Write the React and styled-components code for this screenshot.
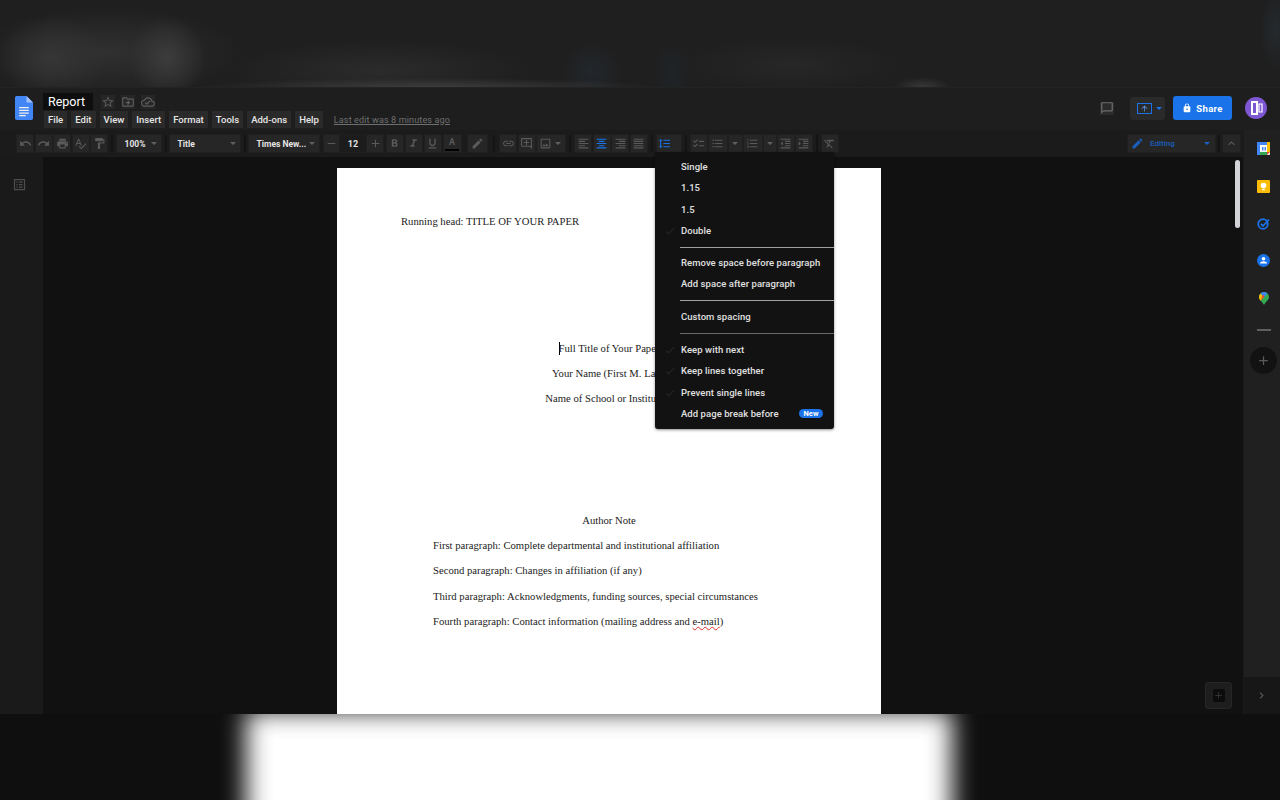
import React from 'react';
import styled, { createGlobalStyle } from 'styled-components';
import {
  MdUndo, MdRedo, MdPrint, MdSpellcheck, MdFormatPaint, MdFormatBold, MdFormatItalic, MdFormatUnderlined,
  MdEdit, MdLink, MdOutlineAddComment, MdOutlineImage, MdFormatAlignLeft, MdFormatAlignCenter, MdFormatAlignRight,
  MdFormatAlignJustify, MdFormatLineSpacing, MdChecklist, MdFormatListBulleted, MdFormatListNumbered,
  MdFormatIndentDecrease, MdFormatIndentIncrease, MdFormatClear, MdExpandLess, MdStarBorder, MdOutlineDriveFileMove,
  MdOutlineCloudDone, MdLock, MdCheck, MdAdd, MdRemove, MdChevronRight, MdOutlineChatBubbleOutline,
  MdOutlineListAlt, MdArrowUpward,
} from 'react-icons/md';

const Global = createGlobalStyle`
  html, body { margin: 0; padding: 0; background: #101010; overflow: hidden; }
  * { box-sizing: border-box; }
`;

const Screen = styled.div`
  width: 1280px; height: 800px; display: flex; flex-direction: column; overflow: hidden;
  font-family: Roboto, "Liberation Sans", sans-serif; background: #101010;
`;
const TopBackdrop = styled.div`
  height: 87px; flex: none;
  background:
    radial-gradient(ellipse 38px 42px at 167px 58px, #3c3c3c, transparent),
    radial-gradient(ellipse 55px 42px at 52px 58px, #363636, transparent),
    radial-gradient(ellipse 130px 45px at 110px 52px, #303030, transparent),
    radial-gradient(ellipse 230px 9px at 430px 87px, #3c3c3c, transparent),
    radial-gradient(ellipse 30px 30px at 592px 72px, #22272c, transparent),
    radial-gradient(ellipse 20px 28px at 672px 72px, #1f2428, transparent),
    radial-gradient(ellipse 28px 10px at 922px 87px, #383838, transparent),
    radial-gradient(ellipse 110px 28px at 790px 65px, #272727, transparent),
    radial-gradient(ellipse 150px 30px at 380px 70px, #2b2b2b, transparent),
    radial-gradient(ellipse 16px 40px at 1276px 30px, #252a2e, transparent),
    linear-gradient(#1f1f1f, #1f1f1f);
`;
const BottomBackdrop = styled.div`
  height: 86px; flex: none; overflow: hidden; background: #0f0f0f; display: flex; justify-content: flex-start; padding-left: 246px;
`;
const BlurSheet = styled.div`
  width: 706px; height: 130px; margin-top: -3px; background: #fff; filter: blur(12px);
`;
const AppWindow = styled.div`
  height: 627px; flex: none; position: relative; display: flex; flex-direction: column; background: #1e1e1e; overflow: hidden;
`;

const Header = styled.header`
  height: 43px; flex: none; display: flex; align-items: flex-start; padding: 5px 13px 0 15px; border-top: 1px solid #232323;
`;
const DocLogo = styled.svg`width: 18px; height: 24px; margin-top: 3px; flex: none;`;
const TitleBlock = styled.div`margin-left: 10px; display: flex; flex-direction: column; gap: 1px;`;
const TitleRow = styled.div`display: flex; align-items: center; height: 17px;`;
const DocTitle = styled.div`
  width: 50px; height: 17px; background: #0e0e0e; color: #fff; font-size: 12.5px; line-height: 17px; padding-left: 5px; font-weight: 400;
`;
const TitleIcons = styled.div`display: flex; gap: 6px; margin-left: 8px; color: #5c5c5c;`;
const TitleTile = styled.div`
  width: 14px; height: 14px; display: flex; align-items: center; justify-content: center; font-size: 14px;
  background: #262626;
`;
const MenuRow = styled.nav`display: flex; align-items: center; height: 17px; margin-left: 1px;`;
const MenuName = styled.div`
  height: 17px; padding: 0 4px; margin-right: 4px; background: #2a2a2a; color: #e6e6e6; font-size: 9.55px; line-height: 17px; font-weight: 500;
`;
const LastEdit = styled.div`
  margin-left: 7px; font-size: 9.1px; letter-spacing: .1px; color: #6f6f6f; text-decoration: underline;
`;
const Spacer = styled.div`flex: 1;`;
const HeaderRight = styled.div`display: flex; align-items: center; height: 24px; margin-top: 3px;`;
const CommentBtn = styled.div`color: #6e6e6e; font-size: 16px; display: flex; margin-right: 16px; margin-left: -1px; background: #2b2b2b; width: 14px; height: 13px; align-items: center; justify-content: center;`;
const PresentBtn = styled.div`
  width: 35px; height: 23px; border-radius: 3px; background: #2a2a2a; display: flex; align-items: center; padding-left: 7px; gap: 4px; color: #1a73e8;
`;
const PresentBox = styled.div`
  width: 15px; height: 11px; border: 1px solid #1a73e8; display: flex; align-items: center; justify-content: center; font-size: 9px; color: #5d9cf0;
`;
const ShareBtn = styled.div`
  width: 59px; height: 24px; margin-left: 8px; border-radius: 3px; background: #1a73e8; color: #fff; display: flex; align-items: center; justify-content: center; gap: 4px;
  font-size: 9.5px; font-weight: 700; letter-spacing: .3px;
`;
const Avatar = styled.div`
  width: 22px; height: 22px; margin-left: 13px; border-radius: 50%; background: #7e57d2; display: flex; align-items: center; justify-content: center;
`;

const Lower = styled.div`flex: 1; min-height: 0; display: flex;`;
const MainCol = styled.div`width: 1243px; flex: none; display: flex; flex-direction: column; min-height: 0;`;
const Toolbar = styled.div`
  height: 27px; flex: none; display: flex; align-items: flex-start; padding: 5px 3px 0 17px; background: #1b1b1b;
`;
const Group = styled.div`display: flex; gap: ${p => p.$gap ?? 2.5}px; margin-left: ${p => p.$ml ?? 0}px;`;
const Sep = styled.div`width: 2px; height: 17px; background: #141414; margin-left: ${p => p.$l ?? p.$m ?? 4}px; margin-right: ${p => p.$m ?? 4}px;`;
const Tile = styled.div`
  width: ${p => p.$w ?? 16}px; height: 17px; flex: none; background: ${p => p.$bg ?? '#262626'}; color: ${p => p.$c ?? '#5a5a5a'};
  display: flex; align-items: center; justify-content: ${p => (p.$between ? 'space-between' : p.$start ? 'flex-start' : 'center')}; font-size: 13px;
  padding: ${p => (p.$between ? '0 4px 0 7.5px' : '0')}; margin-left: ${p => p.$ml ?? 0}px; box-shadow: 0 0 0 1px #1f1f1f;
`;
const ImageTile = styled(Tile)`padding: 0 4px 0 2px;`;
const EditingTile = styled(Tile)`padding: 0 5px 0 3px;`;
const SpacingTile = styled(Tile)`padding-left: 1px;`;
const Label = styled.span`font-size: ${p => p.$s ?? 8.5}px; font-weight: 700; color: #e4e4e4; white-space: nowrap;`;
const Caret = styled.span`width: 0; height: 0; border-left: 3px solid transparent; border-right: 3px solid transparent; border-top: 3px solid ${p => p.$c ?? '#5f5f5f'}; flex: none; margin-left: ${p => (p.$auto ? 'auto' : '0')};`;
const ColorA = styled.div`display: flex; flex-direction: column; align-items: center; font-size: 9px; font-weight: 500; line-height: 11px; color: #5f5f5f;`;
const ColorBar = styled.div`width: 14px; height: 2px; background: #000; margin-top: 1px;`;
const EditingLabel = styled.span`font-size: 8px; color: #1a5fbc; font-weight: 500; margin-left: 6px; flex: 1;`;

const DocArea = styled.div`flex: 1; min-height: 0; display: flex;`;
const LeftRail = styled.div`width: 43px; flex: none; background: #1a1a1a; padding: 20px 0 0 12px; color: #4d4d4d; font-size: 15px;`;
const Canvas = styled.main`flex: 1; background: #111; overflow: hidden; padding: 11px 0 0 294px;`;
const Page = styled.article`
  width: 544px; height: 800px; background: #fff; padding: 41.4px 64px 0; font-family: "Liberation Serif", "Times New Roman", serif;
  font-size: 10.67px; color: #222; line-height: 25.33px;
`;
const Line = styled.div`
  margin-top: ${p => p.$mt ?? 0}px; text-align: ${p => (p.$center ? 'center' : 'left')}; padding-left: ${p => p.$indent ?? 0}px; white-space: nowrap;
`;
const Caretline = styled.span`display: inline-block; width: 1px; height: 13px; background: #000; vertical-align: -3px; margin-right: -1px;`;
const Squiggle = styled.span`text-decoration: underline wavy #d93025 1px;`;
const Scrollbar = styled.div`
  position: absolute; left: 1235px; top: 73px; width: 5px; height: 68px; border-radius: 3px; background: #d2d4d8;
`;
const ExploreBtn = styled.div`
  position: absolute; left: 1205px; top: 595px; width: 27px; height: 27px; border-radius: 3px; background: #1e1e1e; border: 1px solid #262626;
  display: flex; align-items: center; justify-content: center;
`;
const ExploreIcon = styled.div`width: 12px; height: 13px; background: #0c0c0c; color: #333; display: flex; align-items: center; justify-content: center; font-size: 11px; border-radius: 2px;`;

const SidePanel = styled.aside`
  width: 37px; flex: none; display: flex; flex-direction: column; background: #202020; border-left: 1px solid #1b1b1b;
`;
const SideIcons = styled.div`flex: 1; display: flex; flex-direction: column; align-items: center; padding-top: 12.4px; padding-left: 3px;`;
const SideSlot = styled.div`height: 37.3px; width: 100%; flex: none; display: flex; justify-content: center;`;
const SideDash = styled.div`width: 14px; height: 2px; background: #5f5f5f;`;
const PlusCircle = styled.div`
  width: 27px; height: 27px; border-radius: 50%; background: #121212; color: #5a5a5a; font-size: 15px; margin-top: 16px; display: flex; align-items: center; justify-content: center;
`;
const SideFoot = styled.div`height: 37px; flex: none; background: #171717; color: #5a5a5a; font-size: 13px; display: flex; align-items: center; justify-content: center; padding-right: 2px;`;

const SpacingMenu = styled.div`
  position: absolute; left: 655px; top: 65px; width: 179px; height: 277px; background: #121212; border-radius: 0 0 3px 3px; padding-top: 3.8px;
  box-shadow: 0 1px 3px rgba(0,0,0,.45); z-index: 3;
`;
const MenuItem = styled.div`
  height: 21.3px; display: flex; align-items: center; padding-left: 26px; padding-right: 11px; font-size: 9.5px; font-weight: 500; color: #e0e0e0; position: relative; letter-spacing: .06px; white-space: nowrap;
`;
const Check = styled.span`position: absolute; left: 9px; top: 5px; font-size: 12px; color: #262626; display: flex;`;
const MenuSep = styled.div`
  height: 1px; background: ${p => (p.$dim ? '#6a6a6a' : '#a0a0a0')}; margin: ${p => p.$mt ?? 5.6}px 0 ${p => p.$mb ?? 5.1}px 25px;
`;
const NewBadge = styled.span`
  margin-left: auto; width: 24px; height: 9px; border-radius: 5px; background: #1a73e8; color: #fff; font-size: 7.5px; font-weight: 700; line-height: 9px; text-align: center;
`;

const SpacingItem = ({ checked, children }) => (
  <MenuItem>{checked && <Check><MdCheck /></Check>}{children}</MenuItem>
);

export default function App() {
  return (
    <Screen>
      <Global />
      <TopBackdrop />
      <AppWindow>
        <Header>
          <DocLogo viewBox="0 0 18 24">
            <path d="M11.5 0H1.7C.8 0 0 .8 0 1.7v20.6C0 23.2.8 24 1.7 24h14.6c.9 0 1.7-.8 1.7-1.7V6.5L11.5 0z" fill="#4285f4" />
            <path d="M11.5 0v6.5H18z" fill="#a1c2fa" />
            <path d="M4.2 11h9.6v1.3H4.2zM4.2 13.7h9.6V15H4.2zM4.2 16.4h9.6v1.3H4.2zM4.2 19h6.6v1.3H4.2z" fill="#f1f1f1" />
          </DocLogo>
          <TitleBlock>
            <TitleRow>
              <DocTitle>Report</DocTitle>
              <TitleIcons>
                <TitleTile><MdStarBorder /></TitleTile>
                <TitleTile><MdOutlineDriveFileMove /></TitleTile>
                <TitleTile><MdOutlineCloudDone /></TitleTile>
              </TitleIcons>
            </TitleRow>
            <MenuRow>
              {['File', 'Edit', 'View', 'Insert', 'Format', 'Tools', 'Add-ons', 'Help'].map(m => <MenuName key={m}>{m}</MenuName>)}
              <LastEdit>Last edit was 8 minutes ago</LastEdit>
            </MenuRow>
          </TitleBlock>
          <Spacer />
          <HeaderRight>
            <CommentBtn><MdOutlineChatBubbleOutline /></CommentBtn>
            <PresentBtn>
              <PresentBox><MdArrowUpward /></PresentBox>
              <Caret $c="#1a73e8" />
            </PresentBtn>
            <ShareBtn><MdLock size={10} />Share</ShareBtn>
            <Avatar>
              <svg width="13" height="14" viewBox="0 0 13 14"><path d="M1 0h7v14H1z" fill="#fff" /><path d="M3 2h3v10H3z" fill="#7e57d2" /><path d="M9 3h3v8H9z" fill="none" stroke="#fff" strokeWidth="1.2" /></svg>
            </Avatar>
          </HeaderRight>
        </Header>
        <Lower>
          <MainCol>
            <Toolbar>
              <Group>
                <Tile><MdUndo /></Tile><Tile><MdRedo /></Tile><Tile><MdPrint /></Tile><Tile><MdSpellcheck /></Tile><Tile><MdFormatPaint /></Tile>
              </Group>
              <Sep />
              <Tile $w={44} $between><Label>100%</Label><Caret /></Tile>
              <Sep $m={3.5} />
              <Tile $w={70} $between><Label>Title</Label><Caret /></Tile>
              <Sep $m={3.5} />
              <Tile $w={70} $between><Label>Times New...</Label><Caret /></Tile>
              <Group $gap={1} $ml={5}>
                <Tile $w={15}><MdRemove /></Tile>
                <Tile $w={26} $bg="#1c1c1c"><Label $s={9}>12</Label></Tile>
                <Tile $w={16}><MdAdd /></Tile>
              </Group>
              <Group $gap={3} $ml={4}>
                <Tile $w={15.5}><MdFormatBold /></Tile>
                <Tile $w={16}><MdFormatItalic /></Tile>
                <Tile $w={16}><MdFormatUnderlined /></Tile>
                <Tile $w={17}><ColorA>A<ColorBar /></ColorA></Tile>
              </Group>
              <Tile $w={19} $ml={7}><MdEdit /></Tile>
              <Sep $l={6} $m={5.5} />
              <Group>
                <Tile><MdLink /></Tile>
                <Tile><MdOutlineAddComment /></Tile>
                <ImageTile $w={28} $start><MdOutlineImage /><Caret $auto /></ImageTile>
              </Group>
              <Sep />
              <Group>
                <Tile><MdFormatAlignLeft /></Tile>
                <Tile $c="#1a73e8"><MdFormatAlignCenter /></Tile>
                <Tile><MdFormatAlignRight /></Tile>
                <Tile><MdFormatAlignJustify /></Tile>
              </Group>
              <Sep />
              <SpacingTile $w={24} $c="#1a73e8" $start><MdFormatLineSpacing /></SpacingTile>
              <Sep />
              <Group $gap={2}>
                <Tile><MdChecklist /></Tile>
                <Tile $w={18}><MdFormatListBulleted /></Tile>
                <Tile $w={13}><Caret /></Tile>
                <Tile $w={18}><MdFormatListNumbered /></Tile>
                <Tile $w={12}><Caret /></Tile>
                <Tile><MdFormatIndentDecrease /></Tile>
                <Tile><MdFormatIndentIncrease /></Tile>
              </Group>
              <Sep />
              <Tile><MdFormatClear /></Tile>
              <Spacer />
              <EditingTile $w={87} $start $c="#1a5fbc">
                <MdEdit /><EditingLabel>Editing</EditingLabel><Caret $c="#1a63c4" />
              </EditingTile>
              <Sep $m={3} />
              <Tile $w={17}><MdExpandLess /></Tile>
            </Toolbar>
            <DocArea>
              <LeftRail><MdOutlineListAlt /></LeftRail>
              <Canvas>
                <Page>
                  <Line>Running head: TITLE OF YOUR PAPER</Line>
                  <Line $center $mt={101}><Caretline />Full Title of Your Paper</Line>
                  <Line $center>Your Name (First M. Last)</Line>
                  <Line $center>Name of School or Institution</Line>
                  <Line $center $mt={96}>Author Note</Line>
                  <Line $indent={32}>First paragraph: Complete departmental and institutional affiliation</Line>
                  <Line $indent={32}>Second paragraph: Changes in affiliation (if any)</Line>
                  <Line $indent={32}>Third paragraph: Acknowledgments, funding sources, special circumstances</Line>
                  <Line $indent={32}>Fourth paragraph: Contact information (mailing address and <Squiggle>e-mail</Squiggle>)</Line>
                </Page>
              </Canvas>
            </DocArea>
          </MainCol>
          <SidePanel>
            <SideIcons>
              <SideSlot>
                <svg width="13" height="13" viewBox="0 0 13 13">
                  <rect width="13" height="13" rx="1" fill="#fff" />
                  <path d="M0 0h13v3H0z" fill="#4285f4" /><path d="M0 0h3v13H0z" fill="#4285f4" />
                  <path d="M10 0h3v10h-3z" fill="#fbbc04" /><path d="M3 10h7v3H3z" fill="#34a853" /><path d="M10 10h3l-3 3z" fill="#ea4335" />
                  <path d="M5 5h1.5v3.5H5zM7.5 5H9v3.5H7.5z" fill="#4285f4" />
                </svg>
              </SideSlot>
              <SideSlot>
                <svg width="13" height="13" viewBox="0 0 13 13">
                  <rect width="13" height="13" rx="1" fill="#fbbc04" />
                  <circle cx="6.5" cy="5.5" r="2.8" fill="#fff" /><rect x="5.2" y="8.8" width="2.6" height="1.5" fill="#fff" />
                </svg>
              </SideSlot>
              <SideSlot>
                <svg width="13" height="13" viewBox="0 0 13 13" fill="none">
                  <circle cx="6" cy="7" r="4.8" stroke="#1a73e8" strokeWidth="1.8" />
                  <path d="M4 7l2 2 6-6.5" stroke="#1a73e8" strokeWidth="1.8" />
                </svg>
              </SideSlot>
              <SideSlot>
                <svg width="13" height="13" viewBox="0 0 13 13">
                  <circle cx="6.5" cy="6.5" r="6.5" fill="#1a73e8" />
                  <circle cx="6.5" cy="4.8" r="1.8" fill="#fff" /><path d="M3 9.5c0-1.6 2-2.3 3.5-2.3s3.5.7 3.5 2.3z" fill="#fff" />
                </svg>
              </SideSlot>
              <SideSlot>
                <svg width="10" height="13" viewBox="0 0 10 13">
                  <path d="M5 0a5 5 0 0 1 5 5c0 3-3.2 4.5-5 8C3.2 9.5 0 8 0 5a5 5 0 0 1 5-5z" fill="#34a853" />
                  <path d="M0 5a5 5 0 0 1 1.5-3.5L5 5 1.5 8.5C.6 7.5 0 6.4 0 5z" fill="#fbbc04" />
                  <path d="M1.5 1.5A5 5 0 0 1 5 0c1.4 0 2.6.6 3.5 1.5L5 5z" fill="#4285f4" />
                  <path d="M1.5 8.5L5 5V3a2 2 0 0 0-2 2z" fill="#ea4335" />
                </svg>
              </SideSlot>
              <SideDash />
              <PlusCircle><MdAdd /></PlusCircle>
            </SideIcons>
            <SideFoot><MdChevronRight /></SideFoot>
          </SidePanel>
        </Lower>
        <Scrollbar />
        <ExploreBtn><ExploreIcon><MdAdd /></ExploreIcon></ExploreBtn>
        <SpacingMenu>
          <SpacingItem>Single</SpacingItem>
          <SpacingItem>1.15</SpacingItem>
          <SpacingItem>1.5</SpacingItem>
          <SpacingItem checked>Double</SpacingItem>
          <MenuSep $mb={4.2} />
          <SpacingItem>Remove space before paragraph</SpacingItem>
          <SpacingItem>Add space after paragraph</SpacingItem>
          <MenuSep />
          <SpacingItem>Custom spacing</SpacingItem>
          <MenuSep $dim />
          <SpacingItem checked>Keep with next</SpacingItem>
          <SpacingItem checked>Keep lines together</SpacingItem>
          <SpacingItem checked>Prevent single lines</SpacingItem>
          <SpacingItem>Add page break before<NewBadge>New</NewBadge></SpacingItem>
        </SpacingMenu>
      </AppWindow>
      <BottomBackdrop><BlurSheet /></BottomBackdrop>
    </Screen>
  );
}
